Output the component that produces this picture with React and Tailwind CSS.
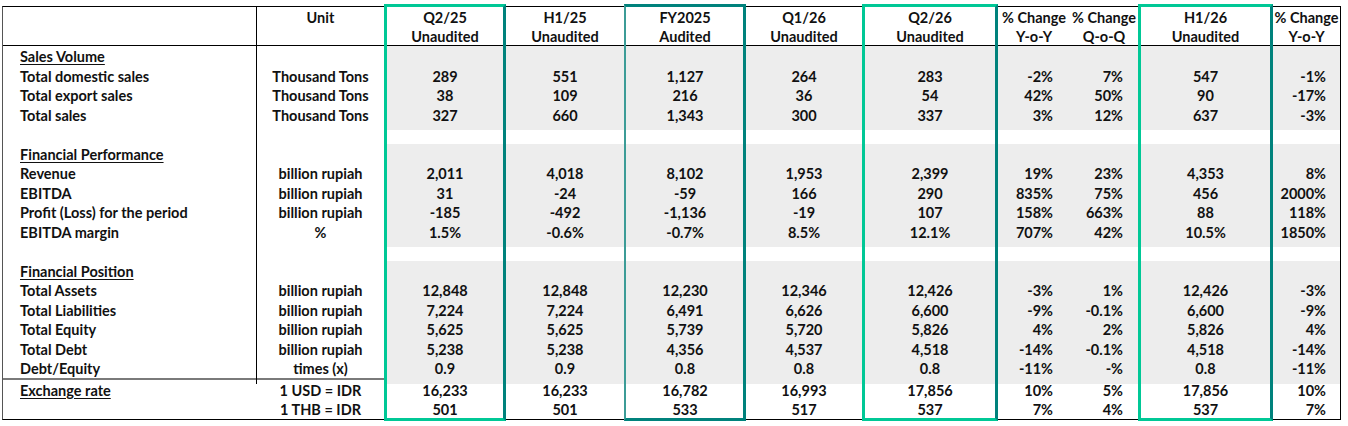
const COLS = 'grid grid-cols-[254px_127px_122px_118px_122px_116px_136px_72px_68px_135px_67px]';

const rows = [
  { type: 'section', label: 'Sales Volume' },
  { label: 'Total domestic sales', unit: 'Thousand Tons', v: ['289', '551', '1,127', '264', '283', '-2%', '7%', '547', '-1%'] },
  { label: 'Total export sales', unit: 'Thousand Tons', v: ['38', '109', '216', '36', '54', '42%', '50%', '90', '-17%'] },
  { label: 'Total sales', unit: 'Thousand Tons', v: ['327', '660', '1,343', '300', '337', '3%', '12%', '637', '-3%'] },
  { type: 'blank' },
  { type: 'section', label: 'Financial Performance' },
  { label: 'Revenue', unit: 'billion rupiah', v: ['2,011', '4,018', '8,102', '1,953', '2,399', '19%', '23%', '4,353', '8%'] },
  { label: 'EBITDA', unit: 'billion rupiah', v: ['31', '-24', '-59', '166', '290', '835%', '75%', '456', '2000%'] },
  { label: 'Profit (Loss) for the period', unit: 'billion rupiah', v: ['-185', '-492', '-1,136', '-19', '107', '158%', '663%', '88', '118%'] },
  { label: 'EBITDA margin', unit: '%', v: ['1.5%', '-0.6%', '-0.7%', '8.5%', '12.1%', '707%', '42%', '10.5%', '1850%'] },
  { type: 'blank' },
  { type: 'section', label: 'Financial Position' },
  { label: 'Total Assets', unit: 'billion rupiah', v: ['12,848', '12,848', '12,230', '12,346', '12,426', '-3%', '1%', '12,426', '-3%'] },
  { label: 'Total Liabilities', unit: 'billion rupiah', v: ['7,224', '7,224', '6,491', '6,626', '6,600', '-9%', '-0.1%', '6,600', '-9%'] },
  { label: 'Total Equity', unit: 'billion rupiah', v: ['5,625', '5,625', '5,739', '5,720', '5,826', '4%', '2%', '5,826', '4%'] },
  { label: 'Total Debt', unit: 'billion rupiah', v: ['5,238', '5,238', '4,356', '4,537', '4,518', '-14%', '-0.1%', '4,518', '-14%'] },
  { label: 'Debt/Equity', unit: 'times (x)', v: ['0.9', '0.9', '0.8', '0.8', '0.8', '-11%', '-%', '0.8', '-11%'] },
  { type: 'fx', label: 'Exchange rate', unit: '1 USD = IDR', v: ['16,233', '16,233', '16,782', '16,993', '17,856', '10%', '5%', '17,856', '10%'] },
  { type: 'fx2', label: '', unit: '1 THB = IDR', v: ['501', '501', '533', '517', '537', '7%', '4%', '537', '7%'] },
];

const headers = [
  ['Q2/25', 'Unaudited'],
  ['H1/25', 'Unaudited'],
  ['FY2025', 'Audited'],
  ['Q1/26', 'Unaudited'],
  ['Q2/26', 'Unaudited'],
  ['% Change', 'Y-o-Y'],
  ['% Change', 'Q-o-Q'],
  ['H1/26', 'Unaudited'],
  ['% Change', 'Y-o-Y'],
];

// alignment per data column; % columns are right aligned in the body
const align = [
  'justify-center',
  'justify-center',
  'justify-center',
  'justify-center',
  'justify-center',
  'justify-end pr-[17px]',
  'justify-end pr-[15px]',
  'justify-center',
  'justify-end pr-[14px]',
];

function DataRow({ row }) {
  const isFx = row.type === 'fx' || row.type === 'fx2';
  const shaded = !isFx && row.type !== 'blank';
  const values = row.v || Array(9).fill('');

  return (
    <div className={`${COLS} h-[19.5px] ${row.type === 'fx' ? 'box-content border-t-2 border-[#7a7a7a]' : ''}`}>
      <div className={`flex items-center pb-[4px] pl-[17px] ${isFx ? '' : 'border-r border-black'}`}>
        <span className={row.type === 'section' || row.type === 'fx' ? 'underline underline-offset-2' : ''}>{row.label}</span>
      </div>
      <div className="flex items-center justify-center pb-[4px]">{row.unit}</div>
      {values.map((val, i) => (
        <div key={i} className={`flex items-center pb-[4px] ${align[i]} ${shaded ? 'bg-[#ededed]' : ''}`}>
          {val}
        </div>
      ))}
    </div>
  );
}

export default function App() {
  return (
    <div className="h-[426px] w-[1348px] bg-white pt-[6px] pl-[2px] font-[Lato,sans-serif] text-[14.5px] font-bold text-[#111]">
      <div className="relative w-fit border-t border-b border-r border-l border-t-black border-b-black border-r-black border-l-[#555]">
        <div className={`${COLS} h-[39px] border-b border-black leading-[19px]`}>
          <div className="border-r border-black" />
          <div className="pt-[1px] text-center">Unit</div>
          {headers.map(([a, b], i) => (
            <div key={i} className="pt-[1px] text-center whitespace-nowrap">
              <div>{a}</div>
              <div>{b}</div>
            </div>
          ))}
        </div>
        {rows.map((row, i) => (
          <DataRow key={i} row={row} />
        ))}

        {/* highlight frames over the period columns */}
        <div className={`${COLS} pointer-events-none absolute inset-x-0 -top-[3px] -bottom-[2px]`}>
          <div className="col-start-3 border-[3px] border-[#00c896] border-r-[#00827c]" />
          <div className="col-start-5 border-[3px] border-l-2 border-[#00827c] border-l-[#3c9c97]" />
          <div className="col-start-7 border-[3px] border-[#00c896] border-r-[#00827c]" />
          <div className="col-start-10 border-[3px] border-[#00c896] border-r-[#00827c]" />
        </div>
      </div>
    </div>
  );
}
